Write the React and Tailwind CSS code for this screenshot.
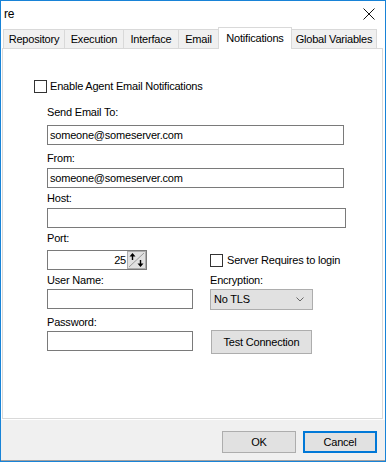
import React from 'react';

const tabs = ['Repository', 'Execution', 'Interface', 'Email', 'Notifications', 'Global Variables'];
const tabWidths = [62, 60, 56, 41, 74, 86];

const Checkbox = () => <div className="w-[13px] h-[13px] border border-[#333333] bg-white shrink-0" />;

const Field = ({ value = '', className = '' }) => (
    <div className={`h-[20px] border border-[#7a7a7a] bg-white flex items-center px-[2px] ${className}`}>
        {value}
    </div>
);

const Label = ({ children, className = '' }) => (
    <div className={`h-[14px] leading-[14px] ${className}`}>{children}</div>
);

const App = () => {
    return (
        <div className="w-[386px] h-[462px] border border-[#1883d7] bg-white flex flex-col text-[11px] tracking-[-0.2px] text-black font-['Liberation_Sans',Arial,sans-serif] overflow-hidden">
            {/* title bar */}
            <div className="h-[25px] flex items-center justify-between pl-[3px] pr-[10px] shrink-0">
                <span className="text-[12px] mt-[1px]">re</span>
                <svg width="12" height="12" viewBox="0 0 12 12" className="mt-[1px]">
                    <path d="M0.5 0.5 L11.5 11.5 M11.5 0.5 L0.5 11.5" stroke="#111" strokeWidth="1" />
                </svg>
            </div>

            {/* tabs */}
            <div className="h-[22px] flex items-end pl-[2px] shrink-0">
                {tabs.map((t, i) => {
                    const active = t === 'Notifications';
                    return (
                        <div
                            key={t}
                            style={{ width: tabWidths[i] }}
                            className={
                                active
                                    ? 'h-[22px] bg-white border border-b-0 border-[#d9d9d9] flex items-start justify-center pt-[2px] relative z-10 -mb-px -ml-px'
                                    : 'h-[19px] bg-[#f0f0f0] border border-b-0 border-[#d9d9d9] flex items-center justify-center -ml-px first:ml-0'
                            }
                        >
                            {t}
                        </div>
                    );
                })}
            </div>

            {/* tab panel */}
            <div className="mx-[1px] mr-[2px] h-[371px] border border-[#d9d9d9] bg-white flex flex-col pl-[44px] shrink-0">
                <div className="mt-[31px] -ml-[13px] flex items-center gap-[3px] h-[13px]">
                    <Checkbox />
                    <span>Enable Agent Email Notifications</span>
                </div>
                <Label className="mt-[12px]">Send Email To:</Label>
                <Field className="mt-[6px] w-[297px]" value="someone@someserver.com" />
                <Label className="mt-[6px]">From:</Label>
                <Field className="mt-[3px] w-[297px]" value="someone@someserver.com" />
                <Label className="mt-[3px]">Host:</Label>
                <Field className="mt-[3px] w-[299px]" />
                <Label className="mt-[3px]">Port:</Label>
                <div className="mt-[5px] flex items-center h-[20px]">
                    <div className="w-[100px] h-[20px] border border-[#7a7a7a] bg-white flex items-center justify-end">
                        <span className="mr-px">25</span>
                        <svg width="19" height="18" viewBox="0 0 19 18" className="shrink-0">
                            <rect x="0" y="0" width="19" height="18" fill="#e1e1e1" />
                            <rect x="0.5" y="0.5" width="18" height="17" fill="none" stroke="#adadad" />
                            <path d="M2 16 L17 2" stroke="#9a9a9a" strokeWidth="1" />
                            <path d="M5.5 2 L2.5 5.5 H4.8 V9 H6.2 V5.5 H8.5 Z" fill="#000" />
                            <path d="M13.5 16 L10.5 12.5 H12.8 V9 H14.2 V12.5 H16.5 Z" fill="#000" />
                        </svg>
                    </div>
                    <div className="ml-[63px] flex items-center gap-[4px]">
                        <Checkbox />
                        <span>Server Requires to login</span>
                    </div>
                </div>
                <div className="mt-[3px] flex">
                    <Label className="w-[163px]">User Name:</Label>
                    <Label>Encryption:</Label>
                </div>
                <div className="mt-[2px] flex items-start">
                    <Field className="w-[146px]" />
                    <div className="ml-[17px] w-[103px] h-[21px] bg-[#e1e1e1] border border-[#adadad] flex items-center justify-between pl-[3px] pr-[8px]">
                        <span>No TLS</span>
                        <svg width="8" height="5" viewBox="0 0 8 5">
                            <path d="M0.5 0.5 L4 4 L7.5 0.5" stroke="#666" fill="none" strokeWidth="1" />
                        </svg>
                    </div>
                </div>
                <Label className="mt-[5px]">Password:</Label>
                <div className="mt-[1px] flex items-start">
                    <Field className="mt-[1px] w-[146px]" />
                    <div className="ml-[18px] w-[101px] h-[24px] bg-[#e1e1e1] border border-[#adadad] flex items-center justify-center">
                        Test Connection
                    </div>
                </div>
            </div>

            {/* footer */}
            <div className="mt-[1px] flex-1 bg-[#f0f0f0] border-b border-[#a0a0a0] flex items-start justify-end gap-[7px] pr-[8px] pt-[11px]">
                <div className="w-[74px] h-[22px] bg-[#e1e1e1] border border-[#adadad] flex items-center justify-center">OK</div>
                <div className="w-[74px] h-[22px] bg-[#e1e1e1] border-2 border-[#0078d7] flex items-center justify-center">Cancel</div>
            </div>
        </div>
    );
};

export default App;
